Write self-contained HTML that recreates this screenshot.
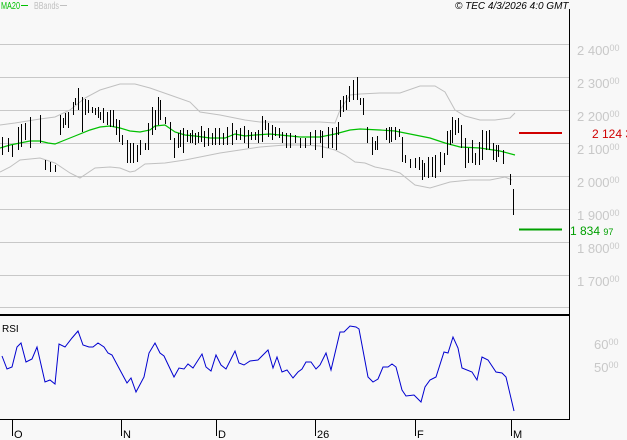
<!DOCTYPE html>
<html><head><style>
body{margin:0;background:#f8f8f8;width:627px;height:440px;overflow:hidden;font-family:"Liberation Sans",sans-serif}
svg{display:block}
text{font-family:"Liberation Sans",sans-serif}
</style></head><body>
<svg width="627" height="440" viewBox="0 0 627 440">
<rect width="627" height="440" fill="#f8f8f8"/>
<g stroke="#c8c8c8" stroke-width="1">
<line x1="0" y1="44.5" x2="569" y2="44.5"/><line x1="0" y1="77.5" x2="569" y2="77.5"/><line x1="0" y1="110.5" x2="569" y2="110.5"/><line x1="0" y1="143.5" x2="569" y2="143.5"/><line x1="0" y1="176.5" x2="569" y2="176.5"/><line x1="0" y1="209.5" x2="569" y2="209.5"/><line x1="0" y1="242.5" x2="569" y2="242.5"/><line x1="0" y1="275.5" x2="569" y2="275.5"/><line x1="0" y1="307.5" x2="569" y2="307.5"/>
</g>
<g fill="#c8c8c8" font-size="13">
<text x="577" y="55">2 400<tspan font-size="9" dy="-4">00</tspan></text>
<text x="577" y="88">2 300<tspan font-size="9" dy="-4">00</tspan></text>
<text x="577" y="121">2 200<tspan font-size="9" dy="-4">00</tspan></text>
<text x="577" y="154">2 100<tspan font-size="9" dy="-4">00</tspan></text>
<text x="577" y="187">2 000<tspan font-size="9" dy="-4">00</tspan></text>
<text x="577" y="220">1 900<tspan font-size="9" dy="-4">00</tspan></text>
<text x="577" y="253">1 800<tspan font-size="9" dy="-4">00</tspan></text>
<text x="577" y="286">1 700<tspan font-size="9" dy="-4">00</tspan></text>
<text x="594" y="349">60<tspan font-size="9" dy="-4">00</tspan></text>
<text x="594" y="372">50<tspan font-size="9" dy="-4">00</tspan></text>
</g>
<polyline fill="none" stroke="#c0c0c0" points="0,125 15,123 40,119 55,117 70,110 85,98 100,90 120,84 135,84 150,88 170,95 190,102 200,112 220,115 245,120 260,122 290,122 320,122 335,123 340,110 350,95 360,94 380,93 400,93 420,86 435,86 445,92 455,110 465,116 480,120 495,120 510,118 515,113"/>
<polyline fill="none" stroke="#c0c0c0" points="0,172 10,167 20,160 40,158 55,163 70,173 80,178 95,168 110,167 120,168 130,172 135,171 145,164 165,163 185,160 200,157 220,153 240,150 260,147 285,145 300,145 320,146 335,150 345,155 355,162 365,163 375,167 390,170 400,173 415,185 430,188 450,182 470,180 490,180 505,177 512,180"/>
<polyline fill="none" stroke="#00c000" stroke-width="1.2" points="0,148 10,145 20,143 30,141 40,141 48,143 55,144 65,140 75,136 90,130 100,127 110,126 120,128 130,131 140,132 150,130 155,126 165,125 175,132 185,135 195,136 210,138 225,138 235,134 245,136 255,135 270,134 280,135 290,136 300,137 320,137 335,134 350,130 360,129 380,130 395,131 410,134 430,138 445,143 460,147 480,148 500,151 515,155"/>
<path stroke="#000" stroke-width="1" shape-rendering="crispEdges" fill="none" transform="translate(0.5,0)" d="M2 137V155M8 138V152M12 145V157M18 127V150M21 124V147M25 123V140M30 117V148M40 115V143M45 160V170M50 162V172M55 165V172M60 115V135M63 118V128M65 113V125M68 112V128M73 102V115M75 98V105M78 88V110M82 97V132M85 99V115M88 100V113M92 107V113M95 108V115M98 107V118M100 112V120M103 108V123M107 112V125M110 110V127M113 110V127M116 119V135M119 120V142M122 135V145M127 140V163M130 143V163M133 143V163M137 145V162M140 140V155M145 143V150M148 123V150M152 107V135M155 110V130M158 97V125M160 100V120M165 117V124M170 122V140M174 138V158M178 133V148M180 130V147M183 128V153M187 130V142M190 133V143M192 130V143M195 133V145M198 132V143M201 126V142M204 131V147M208 128V146M212 133V145M215 128V145M219 128V145M223 133V145M227 127V145M232 123V145M236 130V140M240 128V140M244 126V143M248 130V148M251 132V140M255 132V140M258 130V143M262 116V142M265 120V130M268 123V137M272 125V140M275 127V136M279 128V138M282 132V143M286 133V148M290 133V148M295 135V143M300 138V148M305 138V148M310 132V145M315 130V150M320 130V143M322 131V158M328 127V148M332 128V148M336 127V150M338 122V135M340 100V117M343 96V112M346 95V110M349 86V102M353 80V100M357 77V100M360 98V105M363 98V115M367 127V143M372 137V155M375 141V150M377 136V150M386 128V140M389 127V143M391 127V142M395 127V140M399 129V137M402 137V162M405 155V163M410 159V168M415 158V168M419 157V170M422 160V180M424 163V177M428 157V178M432 157V177M435 155V178M440 152V172M444 153V165M447 131V155M450 130V145M452 117V143M455 120V135M458 118V133M461 125V148M465 138V168M468 148V163M472 140V163M475 153V165M479 142V165M482 130V160M486 131V150M489 130V150M493 143V160M496 145V162M498 145V157M503 150V164M510 174V185M513 189V215"/>
<line x1="519" y1="133" x2="562" y2="133" stroke="#d00000" stroke-width="2"/>
<text x="592" y="138" fill="#d00000" font-size="12">2 124 3</text>
<line x1="519" y1="229.5" x2="562" y2="229.5" stroke="#00a000" stroke-width="2"/>
<text x="570" y="235" fill="#00a000" font-size="12">1 834 <tspan font-size="9">97</tspan></text>
<line x1="0" y1="315" x2="569" y2="315" stroke="#000" stroke-width="2"/>
<line x1="569.5" y1="9" x2="569.5" y2="420" stroke="#000"/>
<line x1="0" y1="419.5" x2="570" y2="419.5" stroke="#000"/>
<text x="2" y="332" font-size="10" fill="#000">RSI</text>
<polyline fill="none" stroke="#0000d0" stroke-width="1" points="2,356 7,369 12,367 17,347 21,343 26,362 32,359 37,347 45,382 50,380 55,384 59,344 65,347 72,338 78,331 83,345 89,347 93,347 98,343 104,347 108,353 112,355 120,370 127,383 131,378 136,392 144,377 149,353 155,343 160,353 164,356 174,377 179,368 184,369 188,364 193,368 202,354 206,367 211,371 216,355 221,365 226,369 235,351 239,363 244,365 250,361 258,360 268,350 273,368 277,357 282,372 287,370 293,378 298,372 302,369 306,362 311,362 316,369 320,365 326,353 331,370 340,332 344,332 350,326 356,327 359,329 368,377 373,382 378,379 383,367 388,367 392,364 396,367 402,390 406,396 414,395 421,402 425,387 430,380 436,377 444,352 448,353 453,337 458,348 462,368 472,372 477,380 482,357 488,360 496,372 502,373 506,377 514,411"/>
<g stroke="#000"><line x1="12.5" y1="420" x2="12.5" y2="436"/><line x1="121.5" y1="420" x2="121.5" y2="436"/><line x1="216.5" y1="420" x2="216.5" y2="436"/><line x1="315.5" y1="420" x2="315.5" y2="436"/><line x1="415.5" y1="420" x2="415.5" y2="436"/><line x1="511.5" y1="420" x2="511.5" y2="436"/></g>
<g font-size="11" fill="#000"><text x="14" y="438">O</text><text x="123" y="438">N</text><text x="218" y="438">D</text><text x="317" y="438">26</text><text x="417" y="438">F</text><text x="513" y="438">M</text></g>
<text x="1" y="9" font-size="10" fill="#00c000" textLength="19" lengthAdjust="spacingAndGlyphs">MA20</text><line x1="21" y1="5.5" x2="28" y2="5.5" stroke="#00c000"/>
<text x="34" y="9" font-size="10" fill="#c0c0c0" textLength="25" lengthAdjust="spacingAndGlyphs">BBands</text><line x1="60" y1="5.5" x2="67" y2="5.5" stroke="#c0c0c0"/>
<text x="455" y="9" font-size="10" font-style="italic" fill="#000">© TEC 4/3/2026 4:0 GMT</text>
</svg>
</body></html>
